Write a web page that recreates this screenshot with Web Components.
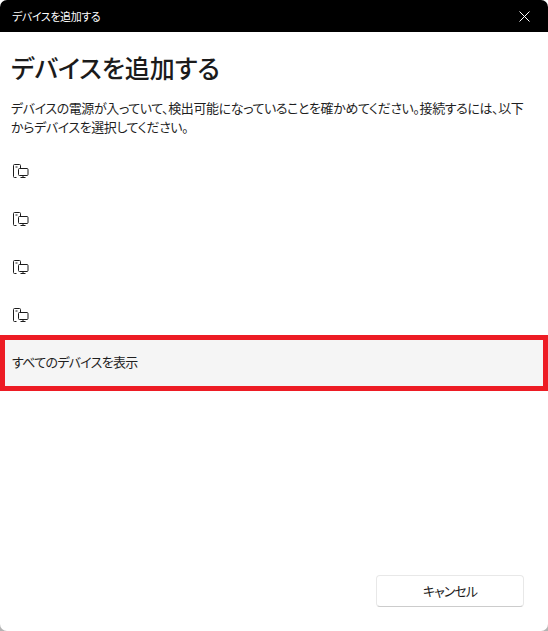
<!DOCTYPE html>
<html lang="ja">
<head>
<meta charset="utf-8">
<style>
html, body { margin: 0; height: 100%; }
body { background: linear-gradient(#fff 600px, #b4b4b4 600px); font-family: "Noto Sans CJK JP", "Liberation Sans", sans-serif; font-feature-settings: "palt"; }
</style>
</head>
<body>
<add-device-dialog>
  <span slot="title">デバイスを追加する</span>
  <device-row></device-row>
  <device-row></device-row>
  <device-row></device-row>
  <device-row></device-row>
  <show-all-row>すべてのデバイスを表示</show-all-row>
</add-device-dialog>
<script>
(function() {
  class AddDeviceDialog extends HTMLElement {
    constructor() {
      super();
      this.attachShadow({ mode: "open" });
      this.shadowRoot.innerHTML = `
  <style>
:host { display: flex; flex-direction: column; width: 548px; height: 631px; background: #fff; border-radius: 0 0 7px 7px; overflow: hidden; color: #1b1b1b; }
.bar { flex: none; height: 32px; background: #000; color: #fff; display: flex; align-items: center; justify-content: space-between; padding: 0 18px 0 12px; font-size: 11px; letter-spacing: -0.4px; border-radius: 7px 7px 0 0; }
.bar svg { display: block; }
h1 { margin: 0; padding: 16px 0 0 11px; font-size: 25px; line-height: 38px; font-weight: 500; }
p { margin: 0; padding: 12px 14px 0 11px; font-size: 13px; letter-spacing: -0.4px; line-height: 19px; color: #1f1f1f; }
.list { display: flex; flex-direction: column; margin-top: 11px; }
.foot { margin-top: auto; display: flex; justify-content: flex-end; padding: 0 24px 24px 0; }
  </style>
  <div class="bar"><slot name="title"></slot>
    <svg width="11" height="11" viewBox="0 0 11 11"><path d="M.5.5l10 10M10.5.5l-10 10" stroke="#fff" fill="none"/></svg>
  </div>
  <h1>デバイスを追加する</h1>
  <p>デバイスの電源が入っていて、検出可能になっていることを確かめてください。接続するには、以下からデバイスを選択してください。</p>
  <div class="list"><slot></slot></div>
  <div class="foot"><dialog-button>キャンセル</dialog-button></div>`;
    }
  }

  class DeviceRow extends HTMLElement {
    constructor() {
      super();
      this.attachShadow({ mode: "open" });
      this.shadowRoot.innerHTML = `
  <style>
:host { display: flex; align-items: center; height: 48px; padding-left: 12px; }
svg { display: block; }
  </style>
  <svg width="17" height="16" viewBox="0 0 17 16" fill="none" stroke="#1b1b1b">
    <path d="M4.5 14.5h-2a1 1 0 0 1-1-1v-11a1 1 0 0 1 1-1h5a1 1 0 0 1 1 1v3"/>
    <rect x="6.5" y="5.5" width="9.5" height="7" rx="1"/>
    <path d="M11 12.5v2M8.5 14.5h5M3.5 4h2"/>
  </svg>`;
    }
  }

  class ShowAllRow extends HTMLElement {
    constructor() {
      super();
      this.attachShadow({ mode: "open" });
      this.shadowRoot.innerHTML = `
  <style>
:host { display: flex; align-items: center; box-sizing: border-box; height: 56px; margin-top: -4px; border: 5px solid #ed1c24; background: #f5f5f5; padding: 0 0 3px 7px; font-size: 13px; letter-spacing: -0.7px; color: #1f1f1f; }
  </style>
  <slot></slot>`;
    }
  }

  class DialogButton extends HTMLElement {
    constructor() {
      super();
      this.attachShadow({ mode: "open" });
      this.shadowRoot.innerHTML = `
  <style>
:host { display: flex; align-items: center; justify-content: center; box-sizing: border-box; width: 148px; height: 32px; padding-bottom: 2px; background: #fff; border: 1px solid #e8e8e8; border-bottom-color: #ccc; border-radius: 4px; font-size: 13px; letter-spacing: -1px; color: #1b1b1b; }
  </style>
  <slot></slot>`;
    }
  }

  customElements.define("add-device-dialog", AddDeviceDialog);
  customElements.define("device-row", DeviceRow);
  customElements.define("show-all-row", ShowAllRow);
  customElements.define("dialog-button", DialogButton);
})();
</script>
</body>
</html>
